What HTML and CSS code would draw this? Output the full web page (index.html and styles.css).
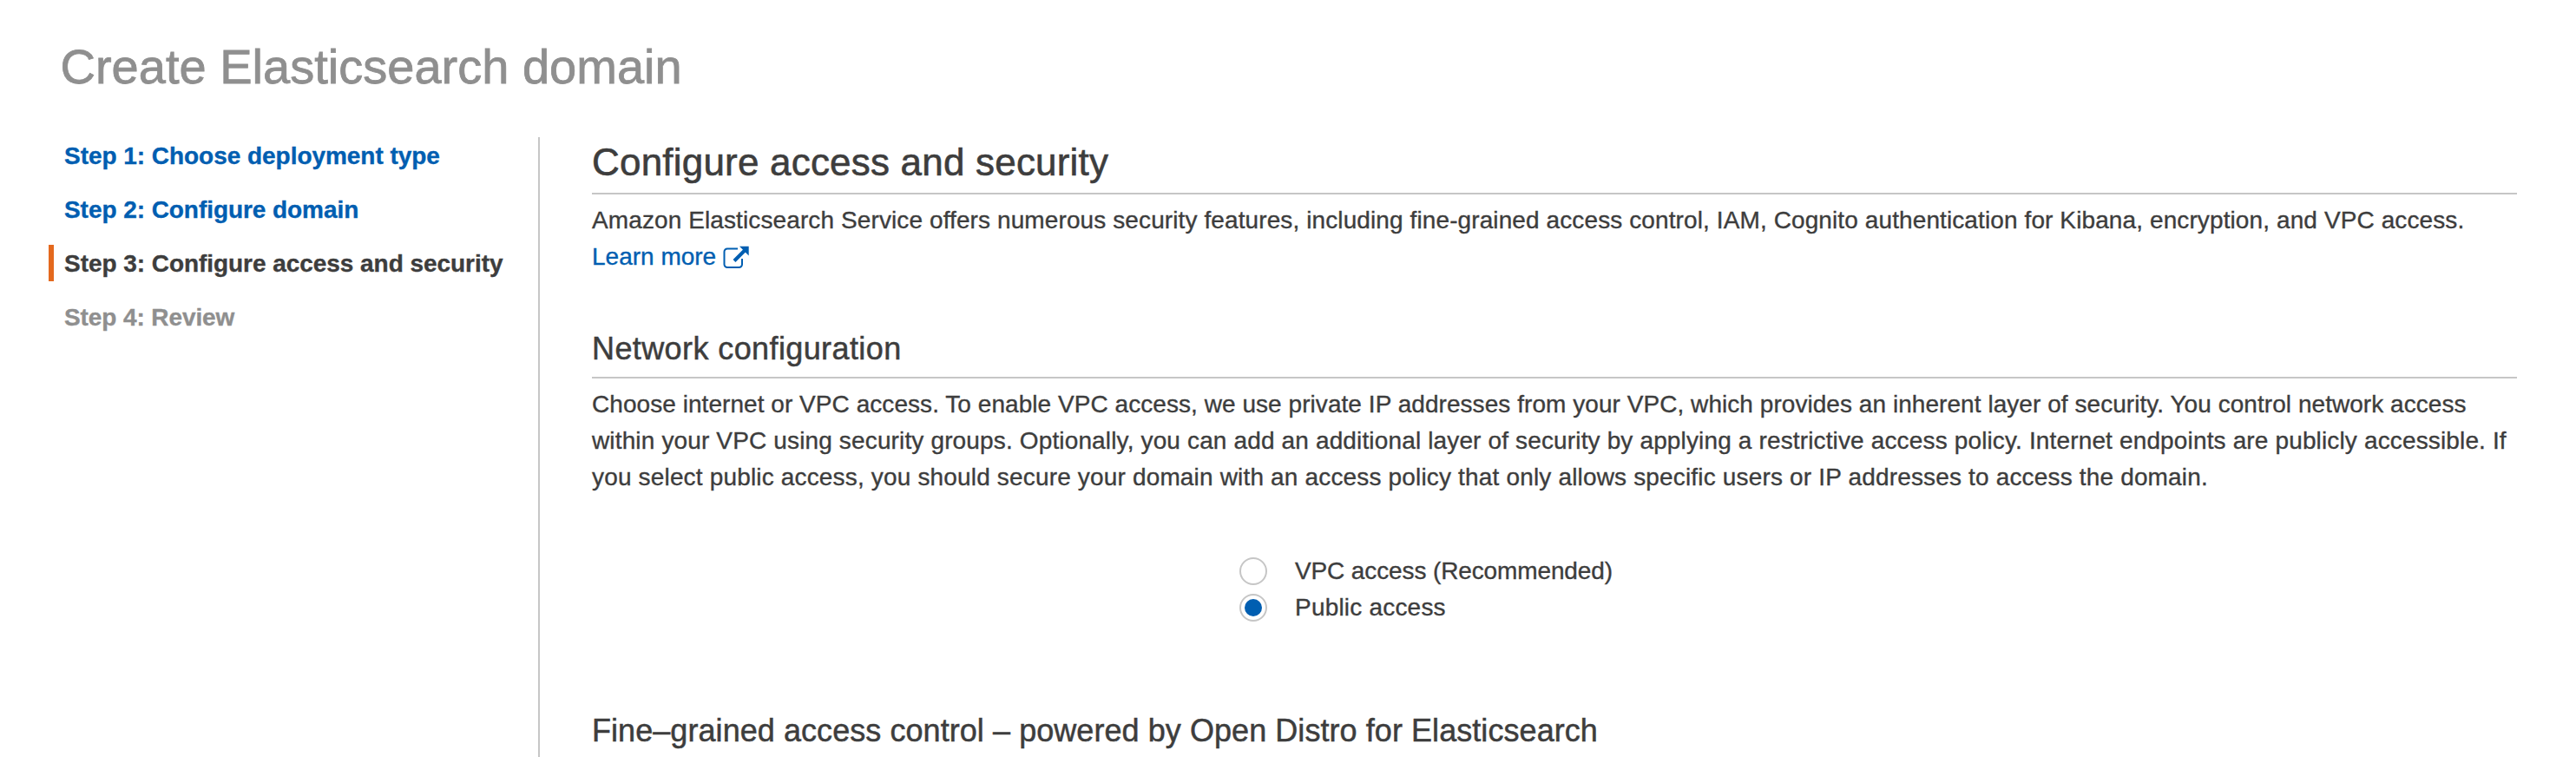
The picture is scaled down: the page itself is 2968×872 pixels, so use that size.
FILE: index.html
```
<!DOCTYPE html>
<html lang="en">
<head>
<meta charset="utf-8">
<title>Create Elasticsearch domain</title>
<link rel="stylesheet" href="styles.css">
</head>
<body>
<h1 class="page-title">Create Elasticsearch domain</h1>
<div class="wizard">
  <nav class="steps">
    <a class="step step-1">Step 1: Choose deployment type</a>
    <a class="step step-2">Step 2: Configure domain</a>
    <span class="step step-3 current">Step 3: Configure access and security</span>
    <span class="step step-4 disabled">Step 4: Review</span>
  </nav>
  <main class="content">
    <h2 class="heading">Configure access and security</h2>
    <p class="text">
      <span class="line intro">Amazon Elasticsearch Service offers numerous security features, including fine-grained access control, IAM, Cognito authentication for Kibana, encryption, and VPC access.</span>
      <a class="line link">Learn more<svg class="external" viewBox="0 0 30 26" width="30" height="26" fill="none" stroke="currentColor" stroke-width="2"><path d="M17 3.500H5A3.500 3.500 0 0 0 1.500 7V21.500A3.500 3.500 0 0 0 5 25H18.500A3.500 3.500 0 0 0 22 21.500V15"/><path d="M13 17.500 25 5.500" stroke-width="4"/><path d="M19 .8H29.700V11.500Z" fill="currentColor" stroke="none"/></svg></a>
    </p>
    <h3 class="subheading network-title">Network configuration</h3>
    <p class="text">
      <span class="line net-1">Choose internet or VPC access. To enable VPC access, we use private IP addresses from your VPC, which provides an inherent layer of security. You control network access</span>
      <span class="line net-2">within your VPC using security groups. Optionally, you can add an additional layer of security by applying a restrictive access policy. Internet endpoints are publicly accessible. If</span>
      <span class="line net-3">you select public access, you should secure your domain with an access policy that only allows specific users or IP addresses to access the domain.</span>
    </p>
    <div class="options">
      <label class="option"><span class="radio"></span><span class="vpc">VPC access (Recommended)</span></label>
      <label class="option"><span class="radio checked"></span><span class="public">Public access</span></label>
    </div>
    <h3 class="subheading control-title">Fine–grained access control – powered by Open Distro for Elasticsearch</h3>
  </main>
</div>
</body>
</html>
```
FILE: styles.css
```
* { box-sizing: border-box; }
body {
  margin: 0;
  height: 872px;
  overflow: hidden;
  background: #fff;
  color: #3d3d3d;
  font: 28px/42px "Liberation Sans", Arial, sans-serif;
  -webkit-text-stroke: 0.35px currentColor;
}
h1, h2, h3, p { margin: 0; font-weight: 400; }
.page-title {
  padding: 45px 0 0 69.5px;
  height: 158px;
  font-size: 56px;
  line-height: 64px;
  letter-spacing: 0.01px;
  color: #8f8f8f;
  -webkit-text-stroke-width: 0.8px;
}
.wizard { display: flex; height: 714px; }
.steps {
  width: 622px;
  padding-left: 56px;
  display: flex;
  flex-direction: column;
  gap: 20px;
  border-right: 2px solid #c6c6c6;
}
.step {
  height: 42px;
  padding-left: 12px;
  border-left: 6px solid transparent;
  font-weight: 700;
  line-height: 44px;
  color: #005eb1;
  white-space: nowrap;
}
.step-1 { letter-spacing: -0.04px; }
.step-2 { letter-spacing: -0.06px; }
.step-3 { letter-spacing: -0.05px; }
.step-4 { letter-spacing: -0.1px; }
.current { color: #3d3d3d; border-left-color: #e4691e; }
.disabled { color: #8f8f8f; }
.content { width: 2278px; padding-left: 60px; }
.heading {
  padding: 4px 0 11px;
  font-size: 44px;
  line-height: 49px;
  letter-spacing: 0.2px;
  -webkit-text-stroke-width: 0.6px;
  border-bottom: 2px solid #c6c6c6;
}
.text { margin-top: 9px; }
.line { display: block; white-space: nowrap; }
.intro { letter-spacing: 0.105px; }
.link { display: flex; color: #005eb1; }
.external { margin: 8px 0 0 8px; }
.net-1 { letter-spacing: 0.052px; }
.net-2 { letter-spacing: 0.145px; }
.net-3 { letter-spacing: 0.166px; }
.subheading {
  padding-bottom: 12px;
  font-size: 36px;
  line-height: 41px;
  -webkit-text-stroke-width: 0.5px;
  border-bottom: 2px solid #c6c6c6;
}
.network-title { margin-top: 64px; letter-spacing: 0.4px; }
.control-title { margin-top: 100px; letter-spacing: 0.062px; }
.options { margin: 66px 0 0 746px; }
.option { display: flex; align-items: center; gap: 32px; height: 42px; }
.radio {
  display: grid;
  place-items: center;
  width: 32px;
  height: 32px;
  border: 2px solid #c6c6c6;
  border-radius: 50%;
}
.checked::after {
  content: "";
  width: 20px;
  height: 20px;
  border-radius: 50%;
  background: #005eb1;
}
.vpc { letter-spacing: -0.12px; }
.public { letter-spacing: 0.2px; }
```
